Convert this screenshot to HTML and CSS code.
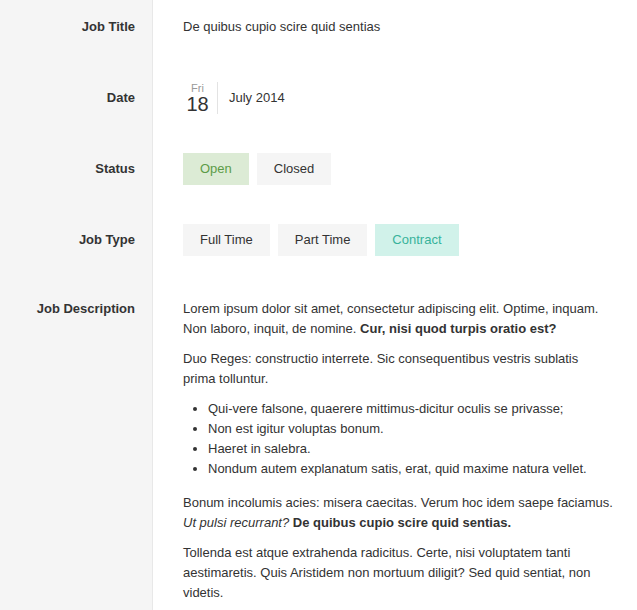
FILE: index.html
```html
<!DOCTYPE html>
<html lang="en">
<head>
    <meta charset="UTF-8">
    <meta name="viewport" content="width=device-width, initial-scale=1.0">
    <title>Job Details</title>
    <link rel="stylesheet" href="styles.css">
</head>
<body>
<div id="details">
    <!-- Job Title -->
    <div class="label">Job Title</div>
    <div class="value text">De quibus cupio scire quid sentias</div>

    <!-- Date -->
    <div class="label">Date</div>
    <div class="value block">
        <div class="date">
            <div class="date-day">
                <span class="weekday">Fri</span>
                <span class="daynum">18</span>
            </div>
            <div class="date-month">July 2014</div>
        </div>
    </div>

    <!-- Status -->
    <div class="label">Status</div>
    <div class="value block">
        <div class="tags">
            <span class="tag open">Open</span>
            <span class="tag">Closed</span>
        </div>
    </div>

    <!-- Job Type -->
    <div class="label">Job Type</div>
    <div class="value block">
        <div class="tags">
            <span class="tag">Full Time</span>
            <span class="tag">Part Time</span>
            <span class="tag contract">Contract</span>
        </div>
    </div>

    <!-- Job Description -->
    <div class="label">Job Description</div>
    <div class="value text desc">
        <p>Lorem ipsum dolor sit amet, consectetur adipiscing elit. Optime, inquam. Non laboro, inquit, de nomine. <b>Cur, nisi quod turpis oratio est?</b></p>
        <p>Duo Reges: constructio interrete. Sic consequentibus vestris sublatis prima tolluntur.</p>
        <ul>
            <li>Qui-vere falsone, quaerere mittimus-dicitur oculis se privasse;</li>
            <li>Non est igitur voluptas bonum.</li>
            <li>Haeret in salebra.</li>
            <li>Nondum autem explanatum satis, erat, quid maxime natura vellet.</li>
        </ul>
        <p>Bonum incolumis acies: misera caecitas. Verum hoc idem saepe faciamus. <i>Ut pulsi recurrant?</i> <b>De quibus cupio scire quid sentias.</b></p>
        <p>Tollenda est atque extrahenda radicitus. Certe, nisi voluptatem tanti aestimaretis. Quis Aristidem non mortuum diligit? Sed quid sentiat, non videtis.</p>
    </div>
</div>
</body>
</html>
```

FILE: styles.css
```css
html, body {
    margin: 0;
    height: 100%;
}
body {
    font-family: "Liberation Sans", Arial, sans-serif;
    font-size: 13px;
    line-height: 20px;
    color: #333;
    background: #fff;
}
#details {
    display: grid;
    grid-template-columns: 152px 1fr;
    grid-template-rows: 71px 71px 71px 69px auto;
    min-height: 100%;
    background: linear-gradient(to right, #f5f5f5 152px, #e8e8e8 152px, #e8e8e8 153px, #fff 153px);
}
.label {
    font-weight: bold;
    text-align: right;
    padding: 17px 17px 0 0;
}
.value {
    padding: 0 24px 0 31px;
}
.value.text {
    padding-top: 17px;
}
.value.block {
    padding-top: 11px;
}

/* date */
.date {
    display: flex;
    align-items: center;
}
.date-day {
    display: flex;
    flex-direction: column;
    align-items: center;
    width: 29px;
    padding-right: 5px;
    border-right: 1px solid #e3e3e3;
}
.weekday {
    font-size: 11px;
    line-height: 12px;
    color: #999;
}
.daynum {
    font-size: 20px;
    line-height: 20px;
    color: #333;
}
.date-month {
    padding-left: 11px;
}

/* tags */
.tags {
    display: flex;
    gap: 8px;
}
.tag {
    display: block;
    height: 32px;
    line-height: 32px;
    padding: 0 17px;
    background: #f5f5f5;
    color: #333;
}
.tag.open {
    background: #dcebd5;
    color: #5c9c48;
}
.tag.contract {
    background: #d1f2ea;
    color: #38b29b;
}

/* description */
.desc {
    padding-bottom: 10px;
}
.desc p {
    margin: 0 0 10px;
}
.desc ul {
    margin: 4px 0 14px;
    padding-left: 25px;
}
```
